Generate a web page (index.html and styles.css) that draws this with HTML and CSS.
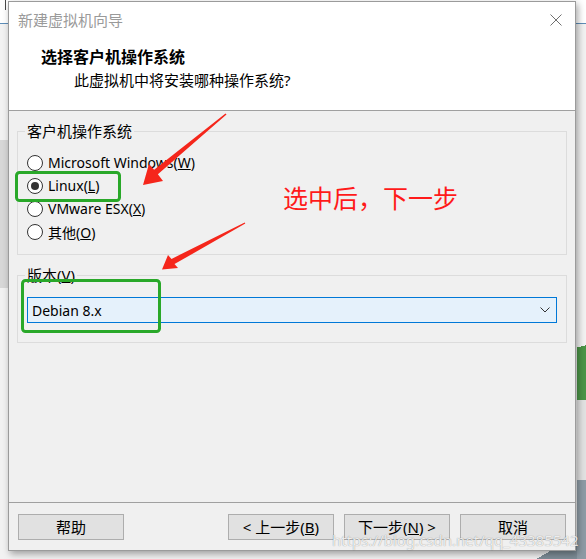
FILE: index.html
```html
<!DOCTYPE html>
<html lang="zh-CN">
<head>
<meta charset="utf-8">
<title>新建虚拟机向导</title>
<link rel="stylesheet" href="styles.css">
</head>
<body>
<div class="screen">
  <div class="dialog">
    <div class="titlebar">
      <span class="title">新建虚拟机向导</span>
      <svg class="close" width="12" height="12" viewBox="0 0 12 12"><path d="M0.5 0.5L11.5 11.5M11.5 0.5L0.5 11.5" stroke="#707070" stroke-width="1" fill="none"/></svg>
    </div>
    <div class="header">
      <div class="heading">选择客户机操作系统</div>
      <div class="sub">此虚拟机中将安装哪种操作系统?</div>
    </div>
    <div class="content">
      <fieldset class="group os">
        <legend>客户机操作系统</legend>
        <div class="radio"><span class="circle"></span><span>Microsoft Windows(<u>W</u>)</span></div>
        <div class="radio"><span class="circle on"></span><span>Linux(<u>L</u>)</span></div>
        <div class="radio"><span class="circle"></span><span>VMware ESX(<u>X</u>)</span></div>
        <div class="radio"><span class="circle"></span><span>其他(<u>O</u>)</span></div>
      </fieldset>
      <fieldset class="group ver">
        <legend>版本(<u>V</u>)</legend>
        <div class="combo">
          <span>Debian 8.x</span>
          <svg class="chev" width="10" height="6" viewBox="0 0 10 6"><path d="M0.5 0.5L5 5L9.5 0.5" stroke="#333" stroke-width="1" fill="none"/></svg>
        </div>
      </fieldset>
    </div>
    <div class="footer">
      <div class="btn">帮助</div>
      <div class="btn-group">
        <div class="btn">&lt; 上一步(<u>B</u>)</div>
        <div class="btn">下一步(<u>N</u>) &gt;</div>
        <div class="btn">取消</div>
      </div>
    </div>
  </div>

  <svg class="marks" width="586" height="559" viewBox="0 0 586 559">
    <rect x="16.5" y="172.5" width="103" height="28" rx="3" ry="3" fill="none" stroke="#29a829" stroke-width="3"/>
    <rect x="22.5" y="280.5" width="137" height="51" rx="3" ry="3" fill="none" stroke="#29a829" stroke-width="3"/>
    <polygon points="225.5,113.5 154.1,169.7 149,164 143,185 163,181 157.9,174.3 226.5,114.5" fill="#f5261b"/>
    <polygon points="244.7,222.4 171.5,258.9 168,255 162,269.5 178,268 174.5,264.1 245.3,223.6" fill="#f5261b"/>
  </svg>
  <div class="note">选中后，下一步</div>
  <div class="watermark">https://blog.csdn.net/qq_43385542</div>
</div>
</body>
</html>
```

FILE: styles.css
```css
* { box-sizing: border-box; }
html, body { margin: 0; padding: 0; }
body {
  width: 586px;
  height: 559px;
  overflow: hidden;
  font-family: "Noto Sans", "Noto Sans CJK SC", sans-serif;
  font-size: 15px;
  color: #000;
}
.screen {
  position: relative;
  width: 586px;
  height: 559px;
  display: flex;
  align-items: flex-start;
  background:
    linear-gradient(#4a4a4a, #4a4a4a) 5px 0 / 1px 10px no-repeat,
    linear-gradient(#5d8db8, #5d8db8) 0 23px / 100% 1px no-repeat,
    linear-gradient(#ffffff, #ffffff) 0 0 / 100% 23px no-repeat,
    linear-gradient(#d7d7d7, #d7d7d7) 0 140px / 8px 148px no-repeat,
    linear-gradient(165deg, transparent 35%, #4b9447 35%) 577px 318px / 9px 82px no-repeat,
    linear-gradient(#e2e2e2, #e2e2e2) 577px 400px / 9px 80px no-repeat,
    linear-gradient(#8d9ba5, #8d9ba5) 577px 480px / 9px 79px no-repeat,
    linear-gradient(150deg, transparent 55%, #7e8d97 55%) 500px 545px / 86px 14px no-repeat,
    #f2f2f2;
}
.dialog {
  width: 568px;
  height: 550px;
  margin: 1px 0 0 8px;
  flex: none;
  border: 1px solid #9b9b9b;
  background: #f0f0f0;
  display: flex;
  flex-direction: column;
  box-shadow: 2px 3px 7px rgba(0, 0, 0, 0.35);
}
.titlebar {
  height: 36px;
  flex: none;
  background: #fff;
  display: flex;
  align-items: center;
  justify-content: space-between;
  padding: 0 13px 0 9px;
}
.title {
  color: #9a9a9a;
  font-size: 15px;
  line-height: 20px;
}
.close { display: block; }
.header {
  flex: none;
  background: #fff;
  padding: 8px 0 20px 32px;
  border-bottom: 1px solid #a0a0a0;
}
.heading {
  font-weight: bold;
  font-size: 16px;
  line-height: 22px;
}
.sub {
  margin-top: 2px;
  padding-left: 33px;
  line-height: 20px;
}
.content {
  flex: 1;
  padding: 0 8px;
}
.group {
  margin: 10px 0 0;
  border: 1px solid #dcdcdc;
  min-width: 0;
}
.group legend {
  padding: 0 2px;
  margin-left: -2px;
  line-height: 20px;
}
.os { padding: 10px 9px 11px; }
.ver { padding: 12px 9px 19px; }
.radio {
  display: flex;
  align-items: center;
  gap: 5px;
  height: 23px;
  font-size: 14px;
}
.circle {
  width: 16px;
  height: 16px;
  flex: none;
  border: 1px solid #333;
  border-radius: 50%;
  background: #fff;
  display: flex;
  align-items: center;
  justify-content: center;
}
.circle.on::after {
  content: "";
  width: 8px;
  height: 8px;
  border-radius: 50%;
  background: #333;
}
.combo {
  height: 26px;
  border: 1px solid #0078d7;
  background: #e5f1fb;
  display: flex;
  align-items: center;
  justify-content: space-between;
  padding: 0 6px 0 4px;
  font-size: 14px;
}
.chev { display: block; }
.footer {
  height: 48px;
  flex: none;
  border-top: 1px solid #a0a0a0;
  padding: 11px 9px 0 9px;
  display: flex;
  justify-content: space-between;
  align-items: flex-start;
}
.btn-group {
  display: flex;
  gap: 10px;
}
.btn {
  width: 106px;
  height: 26px;
  border: 1px solid #adadad;
  background: #e1e1e1;
  display: flex;
  align-items: center;
  justify-content: center;
  font-size: 15px;
  line-height: 20px;
}
.marks {
  position: absolute;
  left: 0;
  top: 0;
  pointer-events: none;
}
.note {
  position: absolute;
  left: 283px;
  top: 184px;
  font-family: "Noto Sans CJK SC", sans-serif;
  font-size: 25px;
  line-height: 26px;
  color: #ff1a1a;
  white-space: nowrap;
}
.watermark {
  position: absolute;
  left: 332px;
  top: 530px;
  font-size: 15px;
  line-height: 20px;
  color: rgba(255, 255, 255, 0.85);
  text-shadow: 0 0 1px rgba(0, 0, 0, 0.45);
  white-space: nowrap;
}
```
